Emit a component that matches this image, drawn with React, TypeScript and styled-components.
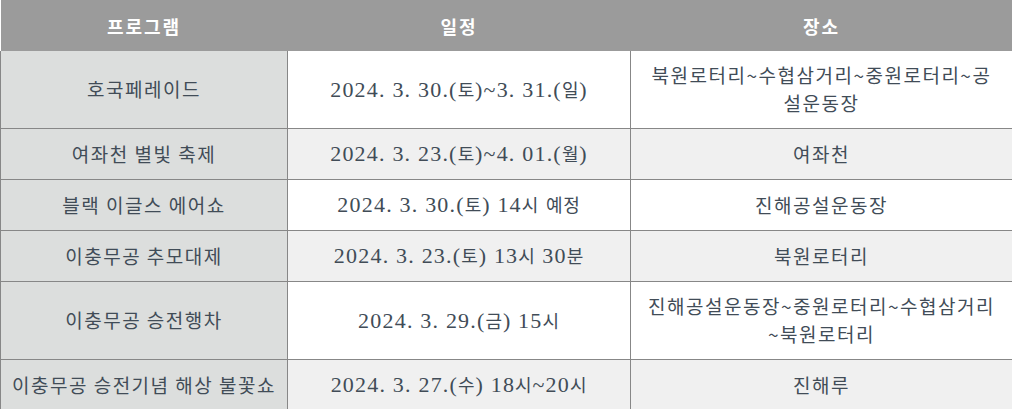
import React from "react";
import styled, { createGlobalStyle } from "styled-components";

const Global = createGlobalStyle`
  html, body { margin: 0; padding: 0; background: #ffffff; }
  body { font-family: "Noto Sans CJK KR", "Noto Sans", sans-serif; }
`;

const Table = styled.table`
  width: 1012px;
  border-collapse: collapse;
  table-layout: fixed;
  color: #414c57;
`;

const HeadCell = styled.th`
  background: #9b9b9b;
  color: #ffffff;
  font-family: "Noto Sans CJK KR", "Noto Sans", sans-serif;
  font-weight: 700;
  font-size: 18px;
  letter-spacing: 2px;
  height: 51px;
  padding: 0;
  text-align: center;
  vertical-align: middle;
  line-height: 24px;
`;

const Cell = styled.td<{ $tone: "label" | "white" | "grey"; $serif?: boolean }>`
  border: 1px solid #878787;
  border-top: none;
  background: ${(p) =>
    p.$tone === "label" ? "#dcdedd" : p.$tone === "grey" ? "#f0f0f0" : "#ffffff"};
  font-family: ${(p) =>
    p.$serif
      ? `"Liberation Serif", "Noto Sans CJK KR", serif`
      : `"Noto Sans CJK KR", "Noto Sans", sans-serif`};
  font-size: ${(p) => (p.$serif ? "22px" : "19px")};
  letter-spacing: ${(p) => (p.$serif ? "1.2px" : "1.5px")};
  text-align: center;
  vertical-align: middle;
  line-height: 28px;
  padding: ${(p) => (p.$tone === "label" ? "10px 6px 11px" : "10px 15px 11px")};
  word-break: normal;
`;

const Hangul = styled.span`
  font-family: "Noto Sans CJK KR", "Noto Sans", sans-serif;
  font-size: 18px;
  letter-spacing: 0.8px;
`;

type Row = { name: string; date: string; place: string };

const rows: Row[] = [
  {
    name: "호국페레이드",
    date: "2024. 3. 30.(토)~3. 31.(일)",
    place: "북원로터리~수협삼거리~중원로터리~공설운동장",
  },
  { name: "여좌천 별빛 축제", date: "2024. 3. 23.(토)~4. 01.(월)", place: "여좌천" },
  { name: "블랙 이글스 에어쇼", date: "2024. 3. 30.(토) 14시 예정", place: "진해공설운동장" },
  { name: "이충무공 추모대제", date: "2024. 3. 23.(토) 13시 30분", place: "북원로터리" },
  {
    name: "이충무공 승전행차",
    date: "2024. 3. 29.(금) 15시",
    place: "진해공설운동장~중원로터리~수협삼거리~북원로터리",
  },
  { name: "이충무공 승전기념 해상 불꽃쇼", date: "2024. 3. 27.(수) 18시~20시", place: "진해루" },
];

const renderDate = (s: string) =>
  s.split(/([\uAC00-\uD7A3]+)/).map((part, i) =>
    /[\uAC00-\uD7A3]/.test(part) ? <Hangul key={i}>{part}</Hangul> : <React.Fragment key={i}>{part}</React.Fragment>
  );

export default function App() {
  return (
    <>
      <Global />
      <Table>
        <colgroup>
          <col style={{ width: 287 }} />
          <col style={{ width: 343 }} />
          <col style={{ width: 382 }} />
        </colgroup>
        <thead>
          <tr>
            <HeadCell>프로그램</HeadCell>
            <HeadCell>일정</HeadCell>
            <HeadCell>장소</HeadCell>
          </tr>
        </thead>
        <tbody>
          {rows.map((r, i) => {
            const tone = i % 2 === 0 ? "white" : "grey";
            return (
              <tr key={i}>
                <Cell $tone="label">{r.name}</Cell>
                <Cell $tone={tone} $serif>
                  {renderDate(r.date)}
                </Cell>
                <Cell $tone={tone}>{r.place}</Cell>
              </tr>
            );
          })}
        </tbody>
      </Table>
    </>
  );
}
